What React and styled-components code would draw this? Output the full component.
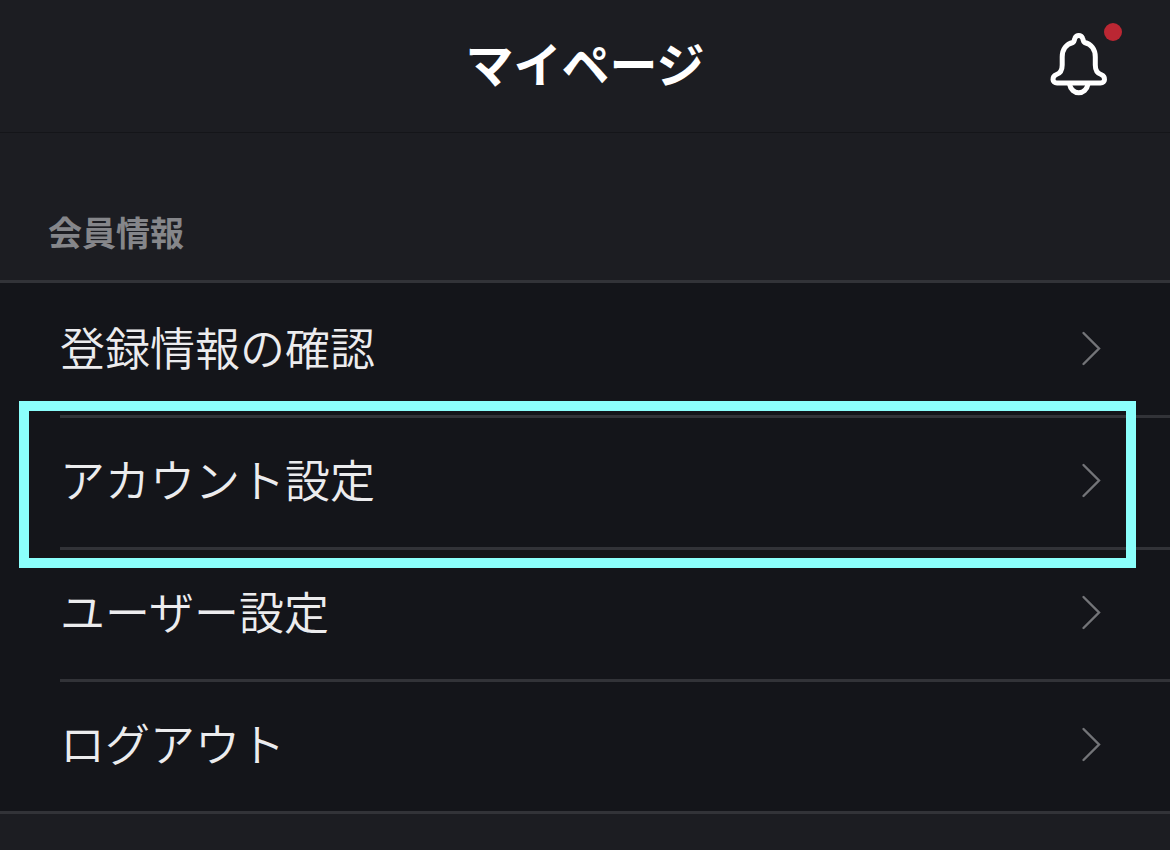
import React from "react";
import styled, { createGlobalStyle } from "styled-components";

const GlobalStyle = createGlobalStyle`
  * { box-sizing: border-box; }
  body {
    margin: 0;
    background: #1c1d22;
    color: #e8e8ea;
    font-family: "Noto Sans CJK JP", sans-serif;
  }
`;

const Page = styled.div`
  min-height: 100vh;
`;

const Header = styled.header`
  display: grid;
  grid-template-columns: 1fr auto 1fr;
  align-items: start;
  padding: 23px 48px 25px;
  border-bottom: 1px solid #141519;
`;

const Title = styled.h1`
  grid-column: 2;
  margin: 0;
  color: #ffffff;
  font-size: 48px;
  line-height: 78px;
  font-weight: 700;
`;

const BellButton = styled.button`
  position: relative;
  justify-self: end;
  display: block;
  width: 84px;
  height: 84px;
  padding: 0;
  border: 0;
  background: none;
  cursor: pointer;
  svg { display: block; }
`;

const Badge = styled.span`
  position: absolute;
  top: 0;
  right: 0;
  width: 18px;
  height: 18px;
  border-radius: 50%;
  background: #bb2733;
`;

const SectionTitle = styled.h2`
  margin: 0;
  padding: 74px 48px 23px;
  color: #85868a;
  font-size: 34px;
  line-height: 50px;
  font-weight: 700;
`;

const Menu = styled.ul`
  margin: 0;
  padding: 0;
  list-style: none;
  background: #14151a;
  border-top: 3px solid #323338;
  border-bottom: 3px solid #323338;
`;

const MenuItem = styled.li`
  position: relative;
  padding-left: 60px;

  & + & > a {
    box-shadow: inset 0 3px 0 #323338;
  }
`;

const MenuLink = styled.a`
  display: flex;
  align-items: center;
  justify-content: space-between;
  height: 132px;
  padding-right: 68px;
  color: #ececee;
  font-size: 45px;
  line-height: 64px;
  font-weight: 350;
  text-decoration: none;
`;

const Label = styled.span`
  padding-bottom: 4px;
`;

const Highlight = styled.span`
  position: absolute;
  z-index: 1;
  top: -14px;
  bottom: -21px;
  left: 19px;
  right: 34px;
  border: 10px solid #8bfffc;
  pointer-events: none;
`;

const items = [
  { label: "登録情報の確認" },
  { label: "アカウント設定", highlighted: true },
  { label: "ユーザー設定" },
  { label: "ログアウト" },
];

function BellIcon() {
  return (
    <svg width="84" height="84" viewBox="0 0 84 84" fill="none" stroke="#ffffff" strokeWidth="5" strokeLinecap="round" strokeLinejoin="round" aria-hidden="true">
      <path d="M19 60H62.5C67.5 60 68 53.5 63 51.5C58.5 50 57.3 46 57.3 42V34C57.3 26 53 21 46.5 19.5C45 18.5 45.5 17 44.5 15C43 11.5 38.5 11.5 37 15C36 17 36.5 18.5 35 19.5C28.5 21 24.2 26 24.2 34V42C24.2 46 23 50 18.5 51.5C13.5 53.5 14 60 19 60Z" />
      <path d="M31.5 61C33.5 72.6 48 72.6 50 61" />
    </svg>
  );
}

function Chevron() {
  return (
    <svg width="22" height="38" viewBox="0 0 22 38" fill="none" stroke="#737478" strokeWidth="2.4" strokeLinecap="round" aria-hidden="true">
      <path d="M3.5 3L19 18.5L3.5 34" />
    </svg>
  );
}

export default function App() {
  return (
    <Page>
      <GlobalStyle />
      <Header>
        <Title>マイページ</Title>
        <BellButton type="button" aria-label="お知らせ">
          <BellIcon />
          <Badge />
        </BellButton>
      </Header>
      <main>
        <SectionTitle>会員情報</SectionTitle>
        <Menu>
          {items.map(({ label, highlighted }) => (
            <MenuItem key={label}>
              <MenuLink href="#">
                <Label>{label}</Label>
                <Chevron />
              </MenuLink>
              {highlighted && <Highlight />}
            </MenuItem>
          ))}
        </Menu>
      </main>
    </Page>
  );
}
